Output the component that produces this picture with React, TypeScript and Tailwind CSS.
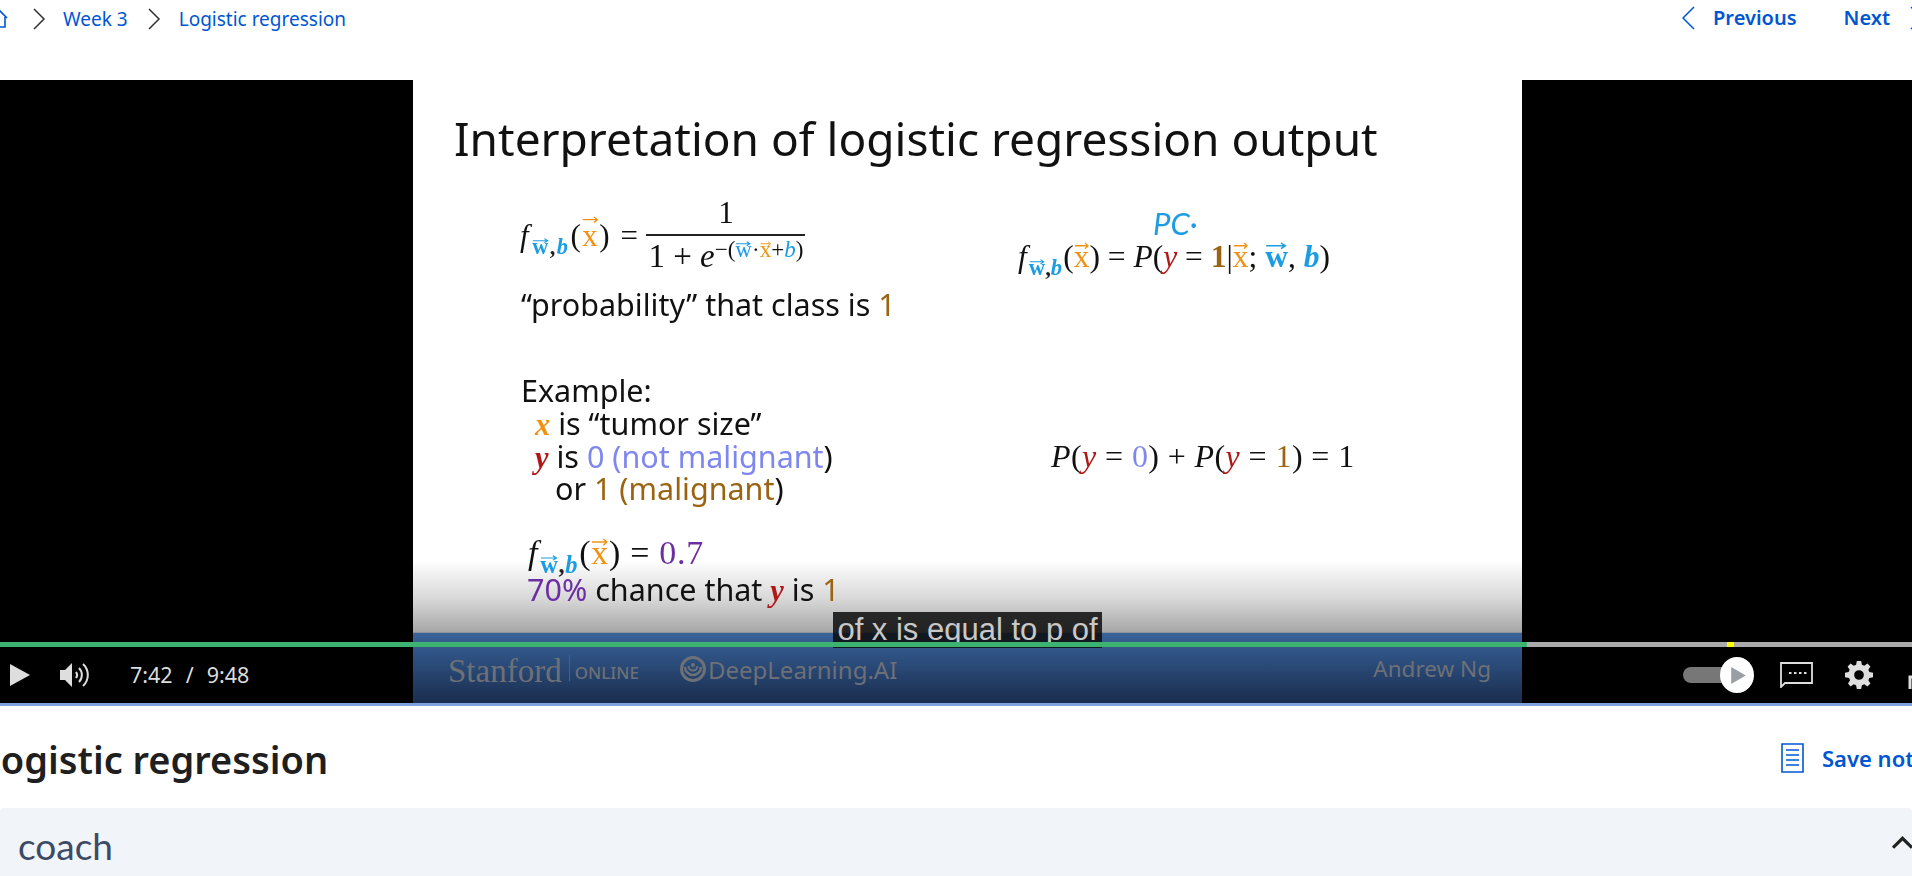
import React from "react";

const ui = "font-['Noto_Sans',sans-serif]";
const math = "font-['Liberation_Serif',serif]";

const orange = "text-[#f29111]";
const blue = "text-[#1c9ce2]";
const red = "text-[#b01818]";
const brown = "text-[#9a6412]";
const peri = "text-[#7f87ee]";
const purple = "text-[#6b2fa3]";

const Vec = ({ c, color }: { c: string; color: string }) => (
  <span className={`relative inline-block not-italic ${color}`}>
    {c}
    <svg viewBox="0 0 20 8" preserveAspectRatio="none" className="absolute left-0 top-[0.1em] h-[0.24em] w-full" fill="none" stroke="currentColor" strokeWidth="1.4">
      <path d="M1 4h17M14 1l4 3-4 3" />
    </svg>
  </span>
);

const Fwb = () => (
  <>
    <i>f</i>
    <span className="ml-[2px] text-[0.72em] font-bold leading-none align-[-0.36em]">
      <Vec c="w" color={blue} />
      <span className="text-[#222]">,</span>
      <i className={blue}>b</i>
    </span>
    <span className="ml-[1px]">(</span>
    <Vec c="x" color={orange} />)
  </>
);

const Breadcrumbs = () => (
  <div className="flex items-center pt-[7px] text-[19px] leading-[24px] text-[#0056d2]">
    <svg viewBox="0 0 16 20" className="-ml-[8px] h-[20px] w-[16px]" fill="none" stroke="currentColor" strokeWidth="1.6">
      <path d="M1 9l7-7 7 7M3 8v10h10V8" />
    </svg>
    <svg viewBox="0 0 14 22" className="ml-[24px] h-[22px] w-[14px]" fill="none" stroke="#333" strokeWidth="1.5">
      <path d="M2 1l10 10L2 21" />
    </svg>
    <span className="ml-[17px]">Week 3</span>
    <svg viewBox="0 0 14 22" className="ml-[19px] h-[22px] w-[14px]" fill="none" stroke="#333" strokeWidth="1.5">
      <path d="M2 1l10 10L2 21" />
    </svg>
    <span className="ml-[18px]">Logistic regression</span>
  </div>
);

const Pager = () => (
  <div className="-mr-[12px] flex shrink-0 items-center pt-[6px] text-[20px] font-semibold leading-[24px] text-[#0056d2]">
    <svg viewBox="0 0 14 24" className="h-[24px] w-[14px]" fill="none" stroke="currentColor" strokeWidth="1.5">
      <path d="M13 1L2 12l11 11" />
    </svg>
    <span className="ml-[18px]">Previous</span>
    <span className="ml-[47px]">Next</span>
    <svg viewBox="0 0 14 24" className="ml-[20px] h-[24px] w-[14px] shrink-0" fill="none" stroke="currentColor" strokeWidth="1.5">
      <path d="M1 1l11 11L1 23" />
    </svg>
  </div>
);

const Slide = () => (
  <div className="flex h-full w-[1109px] flex-col bg-white text-[#111]">
    <div className="relative flex-1 bg-[linear-gradient(to_bottom,#ffffff_0%,#ffffff_87%,#d8d8d8_94%,#a6a6a6_100%)] blur-[0.3px]">
      <h2 className={`${ui} whitespace-nowrap pl-[41px] pt-[28px] text-[46px] leading-[60px]`}>Interpretation of logistic regression output</h2>
      <div className="grid grid-cols-[605px_1fr]">
        <div className={`${ui} flex flex-col pl-[108px] text-[30.5px]`}>
          <div className={`${math} -ml-[1px] mt-[30px] flex items-center text-[31px]`}>
            <span className="mt-[2px] whitespace-nowrap tracking-[1.5px]">
              <Fwb /> =
            </span>
            <div className="ml-[7px] flex w-[159px] flex-col items-center">
              <span className="h-[36px] leading-[30px]">1</span>
              <span className="w-full border-t-2 border-[#222]" />
              <span className="h-[36px] whitespace-nowrap text-[33px] leading-[40px]">
                1 + <i>e</i>
                <span className="text-[23px] leading-none align-[0.42em]">
                  −(<Vec c="w" color={blue} />
                  <span>·</span>
                  <Vec c="x" color={orange} />+<i className={blue}>b</i>)
                </span>
              </span>
            </div>
          </div>
          <p className="mt-[14px] h-[36px] leading-[36px]">
            “probability” that class is <span className={brown}>1</span>
          </p>
          <p className="mt-[52px] h-[33px] leading-[33px]">Example:</p>
          <p className="ml-[14px] h-[33px] leading-[33px]">
            <i className={`${math} ${orange} font-bold`}>x</i> is “tumor size”
          </p>
          <p className="ml-[14px] h-[32px] leading-[33px]">
            <i className={`${math} ${red} font-bold`}>y</i> is <span className={peri}>0 (not malignant</span>)
          </p>
          <p className="ml-[34px] h-[32px] leading-[33px]">
            or <span className={brown}>1 (malignant</span>)
          </p>
          <p className={`${math} ml-[7px] mt-[31px] h-[36px] whitespace-nowrap text-[34px] leading-[36px] tracking-[0.7px]`}>
            <Fwb /> = <span className={purple}>0.7</span>
          </p>
          <p className="ml-[6px] mt-[1px] h-[34px] whitespace-nowrap leading-[34px]">
            <span className={purple}>70%</span> chance that <i className={`${math} ${red} font-bold`}>y</i> is <span className={brown}>1</span>
          </p>
        </div>
        <div className={`${math} flex flex-col text-[32px]`}>
          <span className={`${blue} ml-[135px] mt-[38px] h-[34px] font-['Lato',sans-serif] text-[31px] italic leading-[34px]`}>PC·</span>
          <p className="-mt-[1px] h-[36px] whitespace-nowrap text-[31.5px] leading-[36px]">
            <Fwb /> = <i>P</i>(<i className={red}>y</i> = <span className={`${brown} font-bold`}>1</span>|<Vec c="x" color={orange} />; <span className="font-bold"><Vec c="w" color={blue} /></span>, <i className={`${blue} font-bold`}>b</i>)
          </p>
          <p className="ml-[33px] mt-[163px] h-[36px] whitespace-nowrap leading-[36px] tracking-[0.4px]">
            <i>P</i>(<i className={red}>y</i> = <span className={peri}>0</span>) + <i>P</i>(<i className={red}>y</i> = <span className={brown}>1</span>) = 1
          </p>
        </div>
      </div>
    </div>
    <div className="flex h-[71px] items-start border-t border-[#8a939e] bg-[linear-gradient(to_bottom,#3b6399_0%,#2d5080_35%,#1a2d4e_100%)] pl-[35px] pr-[31px] pt-[19px] text-[#6d7077]">
      <span className={`${math} text-[33px] leading-[38px]`}>Stanford</span>
      <span className="ml-[7px] mt-[3px] h-[26px] border-l border-[#4d5f7a]" />
      <span className={`${ui} ml-[5px] mt-[9px] text-[17px] font-medium leading-[24px]`}>ONLINE</span>
      <svg viewBox="0 0 26 26" className="ml-[41px] mt-[4px] h-[26px] w-[26px] shrink-0" fill="none" stroke="currentColor">
        <circle cx="13" cy="13" r="11.5" strokeWidth="3" />
        <path d="M5 11a8 8 0 0 0 16 0" strokeWidth="2.5" />
        <path d="M8.5 10a4.5 4.5 0 0 0 9 0" strokeWidth="2" />
        <circle cx="13" cy="9" r="2" fill="currentColor" stroke="none" />
      </svg>
      <span className={`${ui} ml-[2px] mt-[1px] text-[24px] leading-[34px]`}>DeepLearning.AI</span>
      <span className={`${ui} ml-auto mt-[2px] text-[22.5px] leading-[30px]`}>Andrew Ng</span>
    </div>
  </div>
);

const Controls = () => (
  <div className="absolute inset-x-0 bottom-0 flex h-[56px] items-center overflow-hidden text-[#dcdcdc]">
    <svg viewBox="0 0 20 22" className="ml-[10px] h-[22px] w-[20px]" fill="#dedede">
      <path d="M0 0l20 11L0 22z" />
    </svg>
    <svg viewBox="0 0 30 26" className="ml-[30px] h-[26px] w-[30px]" fill="none" stroke="#dedede" strokeWidth="2">
      <path d="M0 8h5l7-7v24l-7-7H0z" fill="#dedede" stroke="none" />
      <path d="M16 10a5 5 0 0 1 0 6M19 6a10 10 0 0 1 0 14M23 2a15 15 0 0 1 0 22" />
    </svg>
    <span className={`${ui} ml-[40px] text-[21.5px]`}>7:42</span>
    <span className={`${ui} ml-[13px] text-[21.5px]`}>/</span>
    <span className={`${ui} ml-[13px] text-[21.5px]`}>9:48</span>
    <div className="absolute left-[1683px] flex items-center">
      <div className="relative h-[16px] w-[60px] shrink-0 rounded-full bg-[#777]">
        <div className="absolute -right-[11px] -top-[10px] flex h-[36px] w-[34px] items-center justify-center rounded-[50%] bg-white">
          <svg viewBox="0 0 12 14" className="ml-[2px] h-[17px] w-[15px]" fill="#9a9fa6">
            <path d="M0 0l12 7-12 7z" />
          </svg>
        </div>
      </div>
      <svg viewBox="0 0 33 26" className="ml-[37px] h-[26px] w-[33px] shrink-0" fill="none" stroke="#dedede" strokeWidth="1.8">
        <path d="M1 1h31v20H5l-4 4z" />
        <path d="M9 11h2.5M14 11h2.5M19 11h2.5M24 11h2.5" strokeWidth="2.2" />
      </svg>
      <svg viewBox="0 0 26 26" className="ml-[32px] h-[28px] w-[28px] shrink-0" fill="#dedede">
        <path fillRule="evenodd" d="M11 0h4l.7 3.4 2.2.9 2.9-1.9 2.8 2.8-1.9 2.9.9 2.2L26 11v4l-3.4.7-.9 2.2 1.9 2.9-2.8 2.8-2.9-1.9-2.2.9L15 26h-4l-.7-3.4-2.2-.9-2.9 1.9-2.4-2.8 1.9-2.9-.9-2.2L0 15v-4l3.4-.7.9-2.2-1.9-2.9 2.8-2.8 2.9 1.9 2.2-.9zM13 8.5a4.5 4.5 0 1 0 0 9 4.5 4.5 0 0 0 0-9z" />
      </svg>
      <svg viewBox="0 0 30 14" className="ml-[35px] mt-[14px] h-[14px] w-[30px] shrink-0" fill="none" stroke="#dedede" strokeWidth="3">
        <path d="M2 14V2h8" />
      </svg>
    </div>
  </div>
);

const Video = () => (
  <div className="relative h-[623px] bg-black pl-[413px]">
    <Slide />
    <div className="absolute left-[833px] top-[532px] h-[36px] w-[269px] overflow-hidden whitespace-nowrap bg-[#0c0c0c]/85 text-center font-['Liberation_Sans',sans-serif] text-[31px] leading-[36px] text-[#c8c8c8]">
      of x is equal to p of
    </div>
    <div className="absolute inset-x-0 top-[562px] flex h-[5px] bg-[#aaa]">
      <div className="w-[1527px] bg-[#3cb371]" />
      <div className="ml-[200px] w-[7px] bg-[#ffff00]" />
    </div>
    <Controls />
  </div>
);

export default function App() {
  return (
    <div className={`${ui} flex h-[876px] w-[1912px] flex-col overflow-hidden bg-white`}>
      <div className="flex h-[80px] shrink-0 items-start justify-between overflow-hidden">
        <Breadcrumbs />
        <Pager />
      </div>
      <Video />
      <div className="h-[3px] bg-[#7ea3dc]" />
      <div className="flex h-[102px] items-center justify-between overflow-hidden">
        <h1 className="-ml-[20px] mt-[4px] whitespace-nowrap text-[38px] font-semibold text-[#1f1f1f]">Logistic regression</h1>
        <div className="mt-[2px] flex w-[131px] shrink-0 items-center gap-[18px] whitespace-nowrap text-[#0056d2]">
          <svg viewBox="0 0 23 30" className="h-[30px] w-[23px] shrink-0" fill="none" stroke="currentColor" strokeWidth="1.6">
            <path d="M1 1h21v28H1zM5 7h13M5 12h13M5 17h13M5 22h13" />
          </svg>
          <span className="text-[22px] font-semibold">Save note</span>
        </div>
      </div>
      <div className="flex flex-1 items-center justify-between rounded-t-[4px] bg-[#f1f4f9] pl-[18px]">
        <span className="mt-[6px] font-['Lato',sans-serif] text-[37px] leading-none text-[#3d4a66]">coach</span>
        <svg viewBox="0 0 20 12" className="-mr-[1px] h-[13px] w-[21px]" fill="none" stroke="#222" strokeWidth="3">
          <path d="M1 11l9-9 9 9" />
        </svg>
      </div>
    </div>
  );
}
